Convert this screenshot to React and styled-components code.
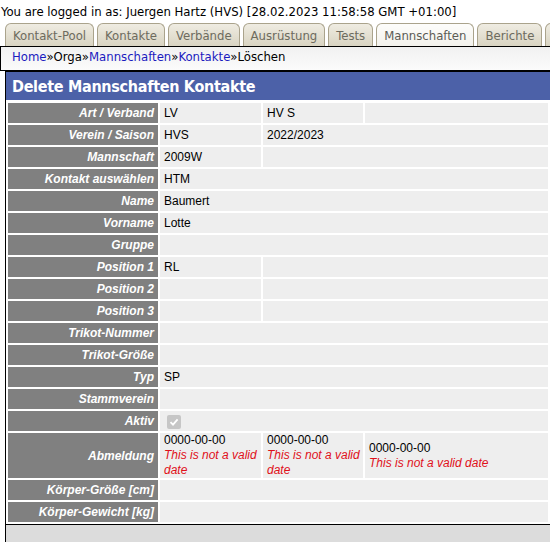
import React from 'react'
import styled, { createGlobalStyle } from 'styled-components';

const GlobalStyle = createGlobalStyle`
    html, body {
        margin: 0;
        padding: 0;
        background: #fff;
        overflow: hidden;
    }
    body {
        font-family: "DejaVu Sans Condensed", "DejaVu Sans", sans-serif;
        font-size: 13px;
        color: #000;
    }
`;

const tahoma = `"DejaVu Sans Condensed", "DejaVu Sans", sans-serif`;
const arial = `"Liberation Sans", Arial, sans-serif`;

const LoginLine = styled.div`
    font-family: ${tahoma};
    font-size: 13px;
    line-height: 16px;
    padding: 4px 0 0 1px;
    height: 20px;
    box-sizing: border-box;
    white-space: nowrap;
`;

const TabBar = styled.div`
    display: flex;
    gap: 3px;
    padding: 3px 0 0 5px;
    white-space: nowrap;
    overflow: hidden;
`;

const Tab = styled.div`
    flex: none;
    height: 23px;
    box-sizing: border-box;
    padding: 4px 7px 0;
    font-family: ${tahoma};
    font-size: 13px;
    line-height: 16px;
    color: ${p => p.$active ? '#5c5c56' : '#6d6b5e'};
    border: 1px solid #aaa38c;
    border-bottom: none;
    border-radius: 6px 6px 0 0;
    background: ${p => p.$active
        ? 'linear-gradient(#fdfdfb, #f3f2ec)'
        : 'linear-gradient(#efece2, #d9d4c2)'};
`;

const Crumbs = styled.div`
    height: 25px;
    box-sizing: border-box;
    border-top: 1px solid #000;
    border-left: 1px solid #000;
    border-bottom: 1px solid #000;
    background: linear-gradient(#f1f1f1, #fbfbfb);
    padding: 2px 0 0 11px;
    font-family: ${tahoma};
    font-size: 13px;
    line-height: 16px;
    white-space: nowrap;
`;

const CrumbLink = styled.a`
    color: #1b1bbf;
    text-decoration: none;
`;

const Panel = styled.div`
    margin-left: 5px;
    border-left: 1px solid #000;
    display: flex;
    flex-direction: column;
`;

const Title = styled.h1`
    margin: 0;
    height: 29px;
    box-sizing: border-box;
    border-top: 1px solid #000;
    background: #4c61a8;
    color: #fff;
    font-family: ${tahoma};
    font-size: 16px;
    font-weight: bold;
    letter-spacing: -0.3px;
    line-height: 20px;
    padding: 5px 0 0 6px;
`;

const FormTable = styled.table`
    width: 544px;
    margin-top: 1px;
    table-layout: fixed;
    border-collapse: separate;
    border-spacing: 2px;
    font-family: ${arial};
    font-size: 12px;
`;

const Label = styled.th`
    height: 20px;
    padding: 0 4px 0 0;
    background: #808080;
    color: #fff;
    font-style: italic;
    font-weight: bold;
    text-align: right;
    line-height: 14px;
    white-space: nowrap;
`;

const Cell = styled.td`
    height: ${p => p.$tall ? '45px' : '20px'};
    padding: 0 0 0 4px;
    background: #eeeeee;
    color: #000;
    line-height: ${p => p.$tall ? '15px' : '14px'};
    vertical-align: middle;
`;

const ErrorText = styled.div`
    color: #e0101a;
    font-style: italic;
    white-space: nowrap;
`;

const CheckBox = styled.span`
    display: inline-flex;
    align-items: center;
    justify-content: center;
    width: 14px;
    height: 14px;
    margin: 2px 0 0 3px;
    border-radius: 2px;
    background: #c6c6c6;
    vertical-align: middle;
`;

const Footer = styled.div`
    border-top: 1px solid #000;
    background: #dcdcdc;
    height: 40px;
`;

const tabs = ["Kontakt-Pool", "Kontakte", "Verbände", "Ausrüstung", "Tests", "Mannschaften", "Berichte", "Admin"];

const rows = [
    { label: "Art / Verband", cells: [["LV"], ["HV S"], [""]] },
    { label: "Verein / Saison", cells: [["HVS"], ["2022/2023", 2]] },
    { label: "Mannschaft", cells: [["2009W"], ["", 2]] },
    { label: "Kontakt auswählen", cells: [["HTM", 3]] },
    { label: "Name", cells: [["Baumert", 3]] },
    { label: "Vorname", cells: [["Lotte", 3]] },
    { label: "Gruppe", cells: [["", 3]] },
    { label: "Position 1", cells: [["RL"], ["", 2]] },
    { label: "Position 2", cells: [[""], ["", 2]] },
    { label: "Position 3", cells: [[""], ["", 2]] },
    { label: "Trikot-Nummer", cells: [["", 3]] },
    { label: "Trikot-Größe", cells: [["", 3]] },
    { label: "Typ", cells: [["SP", 3]] },
    { label: "Stammverein", cells: [["", 3]] },
];

// narrow columns break the message before "date", as the original does
const DateCell = ({ narrow }) => (
    <Cell $tall>
        0000-00-00
        <ErrorText>This is not a valid{narrow ? <br /> : ' '}date</ErrorText>
    </Cell>
);

const App = () => {
    return (
        <>
            <GlobalStyle />
            <LoginLine>You are logged in as: Juergen Hartz (HVS) [28.02.2023 11:58:58 GMT +01:00]</LoginLine>
            <TabBar>
                {tabs.map(t => <Tab key={t} $active={t === "Mannschaften"}>{t}</Tab>)}
            </TabBar>
            <Crumbs>
                <CrumbLink href="#">Home</CrumbLink>»Orga»<CrumbLink href="#">Mannschaften</CrumbLink>»<CrumbLink href="#">Kontakte</CrumbLink>»Löschen
            </Crumbs>
            <Panel>
                <Title>Delete Mannschaften Kontakte</Title>
                <FormTable>
                    <colgroup>
                        <col style={{ width: 150 }} />
                        <col style={{ width: 101 }} />
                        <col style={{ width: 100 }} />
                        <col />
                    </colgroup>
                    <tbody>
                        {rows.map(row => (
                            <tr key={row.label}>
                                <Label>{row.label}</Label>
                                {row.cells.map(([text, span], i) => (
                                    <Cell key={i} colSpan={span || 1}>{text}</Cell>
                                ))}
                            </tr>
                        ))}
                        <tr>
                            <Label>Aktiv</Label>
                            <Cell colSpan={3}>
                                <CheckBox>
                                    <svg width="10" height="10" viewBox="0 0 10 10">
                                        <path d="M1.5 5.2 L4 7.6 L8.6 2.4" fill="none" stroke="#fff" strokeWidth="1.8" />
                                    </svg>
                                </CheckBox>
                            </Cell>
                        </tr>
                        <tr>
                            <Label>Abmeldung</Label>
                            <DateCell narrow />
                            <DateCell narrow />
                            <DateCell />
                        </tr>
                        <tr>
                            <Label>Körper-Größe [cm]</Label>
                            <Cell colSpan={3}></Cell>
                        </tr>
                        <tr>
                            <Label>Körper-Gewicht [kg]</Label>
                            <Cell colSpan={3}></Cell>
                        </tr>
                    </tbody>
                </FormTable>
                <Footer />
            </Panel>
        </>
    )
}

export default App
